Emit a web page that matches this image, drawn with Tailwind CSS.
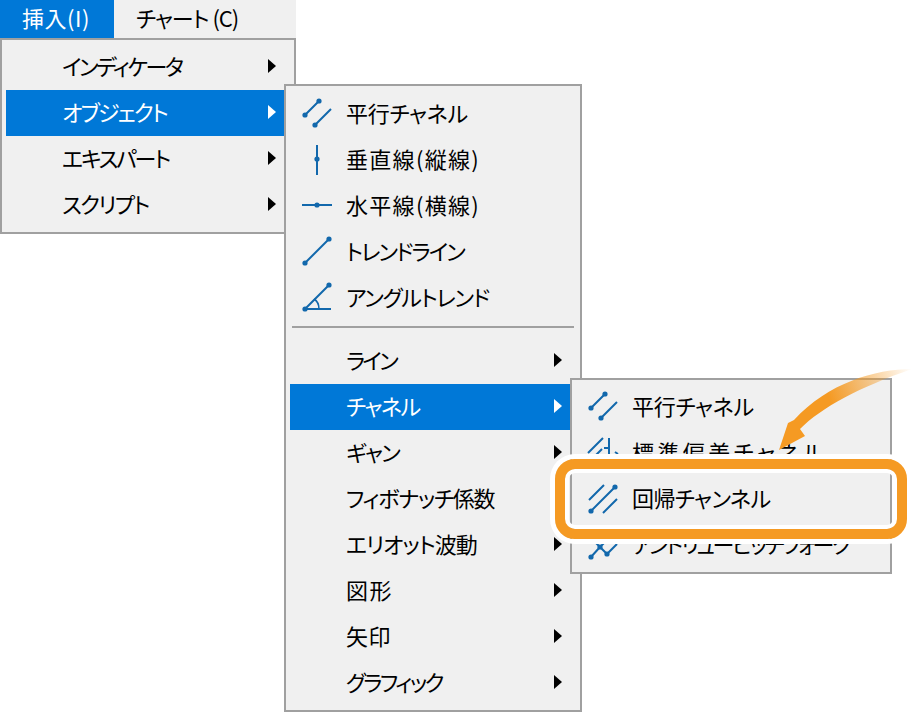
<!DOCTYPE html>
<html lang="ja">
<head>
    <meta charset="UTF-8">
    <meta name="viewport" content="width=device-width, initial-scale=1.0">
    <title>挿入メニュー</title>
    <script src="https://cdn.jsdelivr.net/npm/@tailwindcss/browser@4"></script>
</head>
<body class="bg-white">

<div class="relative w-[912px] h-[712px] overflow-hidden bg-white text-[22px] leading-none text-black font-['Noto_Sans_CJK_JP',sans-serif] [font-feature-settings:'palt']">

    <!-- Menu bar -->
    <nav class="flex w-[296px] h-[38px] items-center bg-[#f0f0f0]">
        <div class="flex items-center w-[114px] h-full pl-[22px] bg-[#0078d7] text-white"><span class="pb-[4px] tracking-[0.5px]">挿入(I)</span></div>
        <div class="pl-[22px]"><span class="block pb-[4px] tracking-[-1px]">チャート (C)</span></div>
    </nav>

    <!-- First level -->
    <div class="absolute left-0 top-[38px] w-[296px] border-2 border-[#a0a0a0] bg-[#f0f0f0] p-1">
        <div class="flex items-center justify-between h-[46px] pl-[56px] pr-[14px]"><span class="pb-[5px] tracking-[-2.4px]">インディケータ</span><i class="mb-[3px] border-y-[7px] border-l-[8px] border-y-transparent border-l-black"></i></div>
        <div class="flex items-center justify-between h-[46px] pl-[56px] pr-[14px] bg-[#0078d7] text-white"><span class="pb-[5px] tracking-[-1.8px]">オブジェクト</span><i class="mb-[3px] border-y-[7px] border-l-[8px] border-y-transparent border-l-white"></i></div>
        <div class="flex items-center justify-between h-[46px] pl-[56px] pr-[14px]"><span class="pb-[5px] tracking-[-2.2px]">エキスパート</span><i class="mb-[3px] border-y-[7px] border-l-[8px] border-y-transparent border-l-black"></i></div>
        <div class="flex items-center justify-between h-[46px] pl-[56px] pr-[14px]"><span class="pb-[5px] tracking-[-1.6px]">スクリプト</span><i class="mb-[3px] border-y-[7px] border-l-[8px] border-y-transparent border-l-black"></i></div>
    </div>

    <!-- Second level -->
    <div class="absolute left-[284px] top-[84px] w-[298px] h-[628px] border-2 border-[#a0a0a0] bg-[#f0f0f0] px-1 pt-[5px]">
        <div class="flex items-center h-[46px]">
            <svg class="w-8 h-8 ml-[11px] mr-[13px] text-[#1268ac]" viewBox="0 0 32 32" fill="currentColor" stroke="currentColor" stroke-width="2"><path d="M4 17 18 3M14 27 30 11" fill="none"/><circle cx="4" cy="17" r="2.6" stroke="none"/><circle cx="18" cy="3" r="2.6" stroke="none"/><circle cx="14" cy="27" r="2.6" stroke="none"/></svg>
            <span class="pb-[5px] tracking-[-0.3px]">平行チャネル</span>
        </div>
        <div class="flex items-center h-[46px]">
            <svg class="w-8 h-8 ml-[11px] mr-[13px] text-[#1268ac]" viewBox="0 0 32 32" fill="currentColor" stroke="currentColor" stroke-width="2"><path d="M16 1V31" fill="none"/><circle cx="16" cy="15" r="2.6" stroke="none"/></svg>
            <span class="pb-[5px] tracking-[1.3px]">垂直線(縦線)</span>
        </div>
        <div class="flex items-center h-[46px]">
            <svg class="w-8 h-8 ml-[11px] mr-[13px] text-[#1268ac]" viewBox="0 0 32 32" fill="currentColor" stroke="currentColor" stroke-width="2"><path d="M1 15H31" fill="none"/><circle cx="16" cy="15" r="2.6" stroke="none"/></svg>
            <span class="pb-[5px] tracking-[1.3px]">水平線(横線)</span>
        </div>
        <div class="flex items-center h-[46px]">
            <svg class="w-8 h-8 ml-[11px] mr-[13px] text-[#1268ac]" viewBox="0 0 32 32" fill="currentColor" stroke="currentColor" stroke-width="2"><path d="M4 27 28 3" fill="none"/><circle cx="4" cy="27" r="2.6" stroke="none"/><circle cx="28" cy="3" r="2.6" stroke="none"/></svg>
            <span class="pb-[5px] tracking-[-1.9px]">トレンドライン</span>
        </div>
        <div class="flex items-center h-[46px]">
            <svg class="w-8 h-8 ml-[11px] mr-[13px] text-[#1268ac]" viewBox="0 0 32 32" fill="currentColor" stroke="currentColor" stroke-width="2"><path d="M4 27 28 3M4 27H30" fill="none"/><path d="M13 17Q18 20 18 27" fill="none" stroke-width="1.5"/><circle cx="4" cy="27" r="2.6" stroke="none"/><circle cx="28" cy="3" r="2.6" stroke="none"/></svg>
            <span class="pb-[5px] tracking-[-1.25px]">アングルトレンド</span>
        </div>

        <hr class="mx-[2px] mt-[5px] mb-[10px] h-[2px] border-0 bg-[#a0a0a0]">

        <div class="flex items-center justify-between h-[46px] pl-[56px] pr-[14px]"><span class="pb-[5px] tracking-[-2.6px]">ライン</span><i class="mb-[3px] border-y-[7px] border-l-[8px] border-y-transparent border-l-black"></i></div>
        <div class="flex items-center justify-between h-[46px] pl-[56px] pr-[14px] bg-[#0078d7] text-white"><span class="pb-[5px] tracking-[-1.5px]">チャネル</span><i class="mb-[3px] border-y-[7px] border-l-[8px] border-y-transparent border-l-white"></i></div>
        <div class="flex items-center justify-between h-[46px] pl-[56px] pr-[14px]"><span class="pb-[5px] tracking-[-1.7px]">ギャン</span><i class="mb-[3px] border-y-[7px] border-l-[8px] border-y-transparent border-l-black"></i></div>
        <div class="flex items-center h-[46px] pl-[56px] pr-[14px]"><span class="pb-[5px] tracking-[-1.3px]">フィボナッチ係数</span></div>
        <div class="flex items-center justify-between h-[46px] pl-[56px] pr-[14px]"><span class="pb-[5px] tracking-[-1px]">エリオット波動</span><i class="mb-[3px] border-y-[7px] border-l-[8px] border-y-transparent border-l-black"></i></div>
        <div class="flex items-center justify-between h-[46px] pl-[56px] pr-[14px]"><span class="pb-[5px] tracking-[1.5px]">図形</span><i class="mb-[3px] border-y-[7px] border-l-[8px] border-y-transparent border-l-black"></i></div>
        <div class="flex items-center justify-between h-[46px] pl-[56px] pr-[14px]"><span class="pb-[5px] tracking-[0.5px]">矢印</span><i class="mb-[3px] border-y-[7px] border-l-[8px] border-y-transparent border-l-black"></i></div>
        <div class="flex items-center justify-between h-[46px] pl-[56px] pr-[14px]"><span class="pb-[5px] tracking-[-2.5px]">グラフィック</span><i class="mb-[3px] border-y-[7px] border-l-[8px] border-y-transparent border-l-black"></i></div>
    </div>

    <!-- Third level -->
    <div class="absolute left-[570px] top-[378px] w-[322px] border-2 border-[#a0a0a0] bg-[#f0f0f0] p-1">
        <div class="flex items-center h-[46px]">
            <svg class="w-8 h-8 ml-[11px] mr-[13px] text-[#1268ac]" viewBox="0 0 32 32" fill="currentColor" stroke="currentColor" stroke-width="2"><path d="M4 17 18 3M14 27 30 11" fill="none"/><circle cx="4" cy="17" r="2.6" stroke="none"/><circle cx="18" cy="3" r="2.6" stroke="none"/><circle cx="14" cy="27" r="2.6" stroke="none"/></svg>
            <span class="pb-[5px] tracking-[-0.3px]">平行チャネル</span>
        </div>
        <div class="flex items-center h-[46px]">
            <svg class="w-8 h-8 ml-[11px] mr-[13px] text-[#1268ac]" viewBox="0 0 32 32" fill="none" stroke="currentColor" stroke-width="2"><path d="M1 16 16 1M9 18 15 12M22 1V30M17 11H22M28 15 31 17" /></svg>
            <span class="pb-[5px] tracking-[3.4px]">標準偏差チャネル</span>
        </div>
        <div class="flex items-center h-[46px]">
            <svg class="w-8 h-8 ml-[11px] mr-[13px] text-[#1268ac]" viewBox="0 0 32 32" fill="currentColor" stroke="currentColor" stroke-width="2"><path d="M2 17 17 2M4 28 28 4M16 30 30 16" fill="none"/><circle cx="4" cy="28" r="2.6" stroke="none"/><circle cx="28" cy="4" r="2.6" stroke="none"/></svg>
            <span class="pb-[5px] tracking-[-0.6px]">回帰チャンネル</span>
        </div>
        <div class="flex items-center h-[46px]">
            <svg class="w-8 h-8 ml-[11px] mr-[13px] text-[#1268ac]" viewBox="0 0 32 32" fill="currentColor" stroke="currentColor" stroke-width="2"><path d="M4 28 13 18 20 25 30 15M13 18 8 13M13 18 18 13" fill="none"/><circle cx="4" cy="28" r="2.6" stroke="none"/><circle cx="13" cy="18" r="2.6" stroke="none"/><circle cx="20" cy="25" r="2.6" stroke="none"/></svg>
            <span class="pb-[5px] tracking-[-2.5px]">アンドリューピッチフォーク</span>
        </div>
    </div>

    <!-- Callout -->
    <svg class="absolute left-[760px] top-[360px] w-[152px] h-[100px]" viewBox="0 0 152 100">
        <defs>
            <linearGradient id="tail" gradientUnits="userSpaceOnUse" x1="152" y1="9" x2="70" y2="40">
                <stop offset="0" stop-color="#f59a23" stop-opacity="0"/>
                <stop offset="1" stop-color="#f59a23"/>
            </linearGradient>
        </defs>
        <path d="M152 9C115 9 68 23 34 60L28 63 19 90 45 76 40 69C62 47 100 27 152 9Z" fill="url(#tail)"/>
    </svg>
    <div class="absolute left-[555px] top-[459px] w-[352px] h-[80px] rounded-[20px] border-[10px] border-[#f59a23] shadow-[0_0_0_5px_#fff,inset_0_0_0_4px_#fff]"></div>

</div>

</body>
</html>
